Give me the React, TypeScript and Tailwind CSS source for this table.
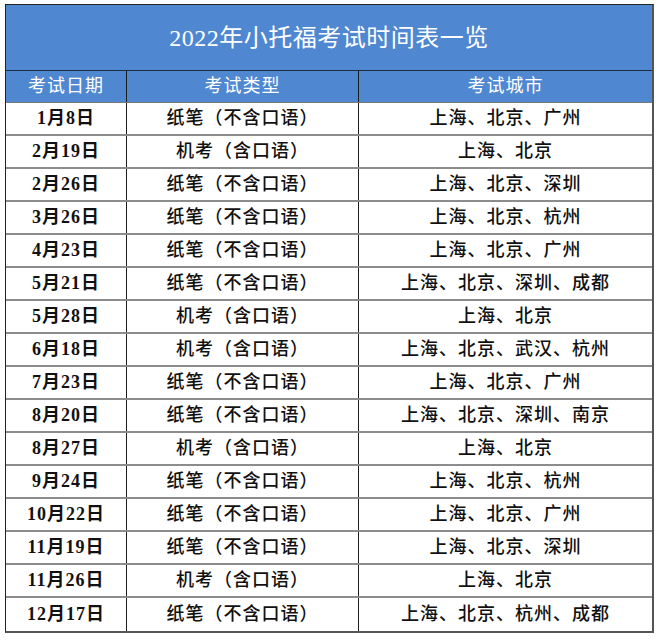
import React from 'react';

/* 2022 小托福考试时间表 — spreadsheet-style schedule */

type Row = { date: string; kind: string; cities: string };

const ROWS: Row[] = [
  { date: '1月8日', kind: '纸笔（不含口语）', cities: '上海、北京、广州' },
  { date: '2月19日', kind: '机考（含口语）', cities: '上海、北京' },
  { date: '2月26日', kind: '纸笔（不含口语）', cities: '上海、北京、深圳' },
  { date: '3月26日', kind: '纸笔（不含口语）', cities: '上海、北京、杭州' },
  { date: '4月23日', kind: '纸笔（不含口语）', cities: '上海、北京、广州' },
  { date: '5月21日', kind: '纸笔（不含口语）', cities: '上海、北京、深圳、成都' },
  { date: '5月28日', kind: '机考（含口语）', cities: '上海、北京' },
  { date: '6月18日', kind: '机考（含口语）', cities: '上海、北京、武汉、杭州' },
  { date: '7月23日', kind: '纸笔（不含口语）', cities: '上海、北京、广州' },
  { date: '8月20日', kind: '纸笔（不含口语）', cities: '上海、北京、深圳、南京' },
  { date: '8月27日', kind: '机考（含口语）', cities: '上海、北京' },
  { date: '9月24日', kind: '纸笔（不含口语）', cities: '上海、北京、杭州' },
  { date: '10月22日', kind: '纸笔（不含口语）', cities: '上海、北京、广州' },
  { date: '11月19日', kind: '纸笔（不含口语）', cities: '上海、北京、深圳' },
  { date: '11月26日', kind: '机考（含口语）', cities: '上海、北京' },
  { date: '12月17日', kind: '纸笔（不含口语）', cities: '上海、北京、杭州、成都' },
];

const FONT = "font-['Liberation_Serif','Noto_Sans_CJK_SC',serif]";
const GRID = 'grid grid-cols-[121px_232px_1fr]';

export default function App() {
  return (
    <div className={`w-[660px] h-[641px] bg-white ${FONT}`}>
      <div className="pl-[5px] pt-[4px]">
        <div className="w-[649px] border-l border-t border-b-2 border-r-2 border-l-[#222] border-t-[#222] border-b-[#555] border-r-[#555]">
          {/* title band */}
          <div className="h-[66px] bg-[#4f87d0] border-b border-[#1d2b40] flex items-center justify-center text-white text-[24px] tracking-[0.5px]">
            2022年小托福考试时间表一览
          </div>

          {/* header row */}
          <div className={`${GRID} h-[32px] bg-[#4f87d0] text-white text-[18px] tracking-[1px] border-b border-[#7a7a7a]`}>
            <div className="flex items-center justify-center border-r border-[#1d1d1d]">考试日期</div>
            <div className="flex items-center justify-center border-r border-[#1d1d1d]">考试类型</div>
            <div className="flex items-center justify-center">考试城市</div>
          </div>

          {/* data rows */}
          {ROWS.map((r, i) => (
            <div
              key={i}
              className={`${GRID} h-[33px] text-[18px] font-medium tracking-[1px] text-[#111] ${
                i < ROWS.length - 1 ? 'border-b-2 border-b-[#8c8c8c]' : ''
              }`}
            >
              <div className="flex items-center justify-center border-r border-[#1d1d1d] font-bold">{r.date}</div>
              <div className="flex items-center justify-center border-r border-[#1d1d1d]">{r.kind}</div>
              <div className="flex items-center justify-center">{r.cities}</div>
            </div>
          ))}
        </div>
      </div>
    </div>
  );
}
